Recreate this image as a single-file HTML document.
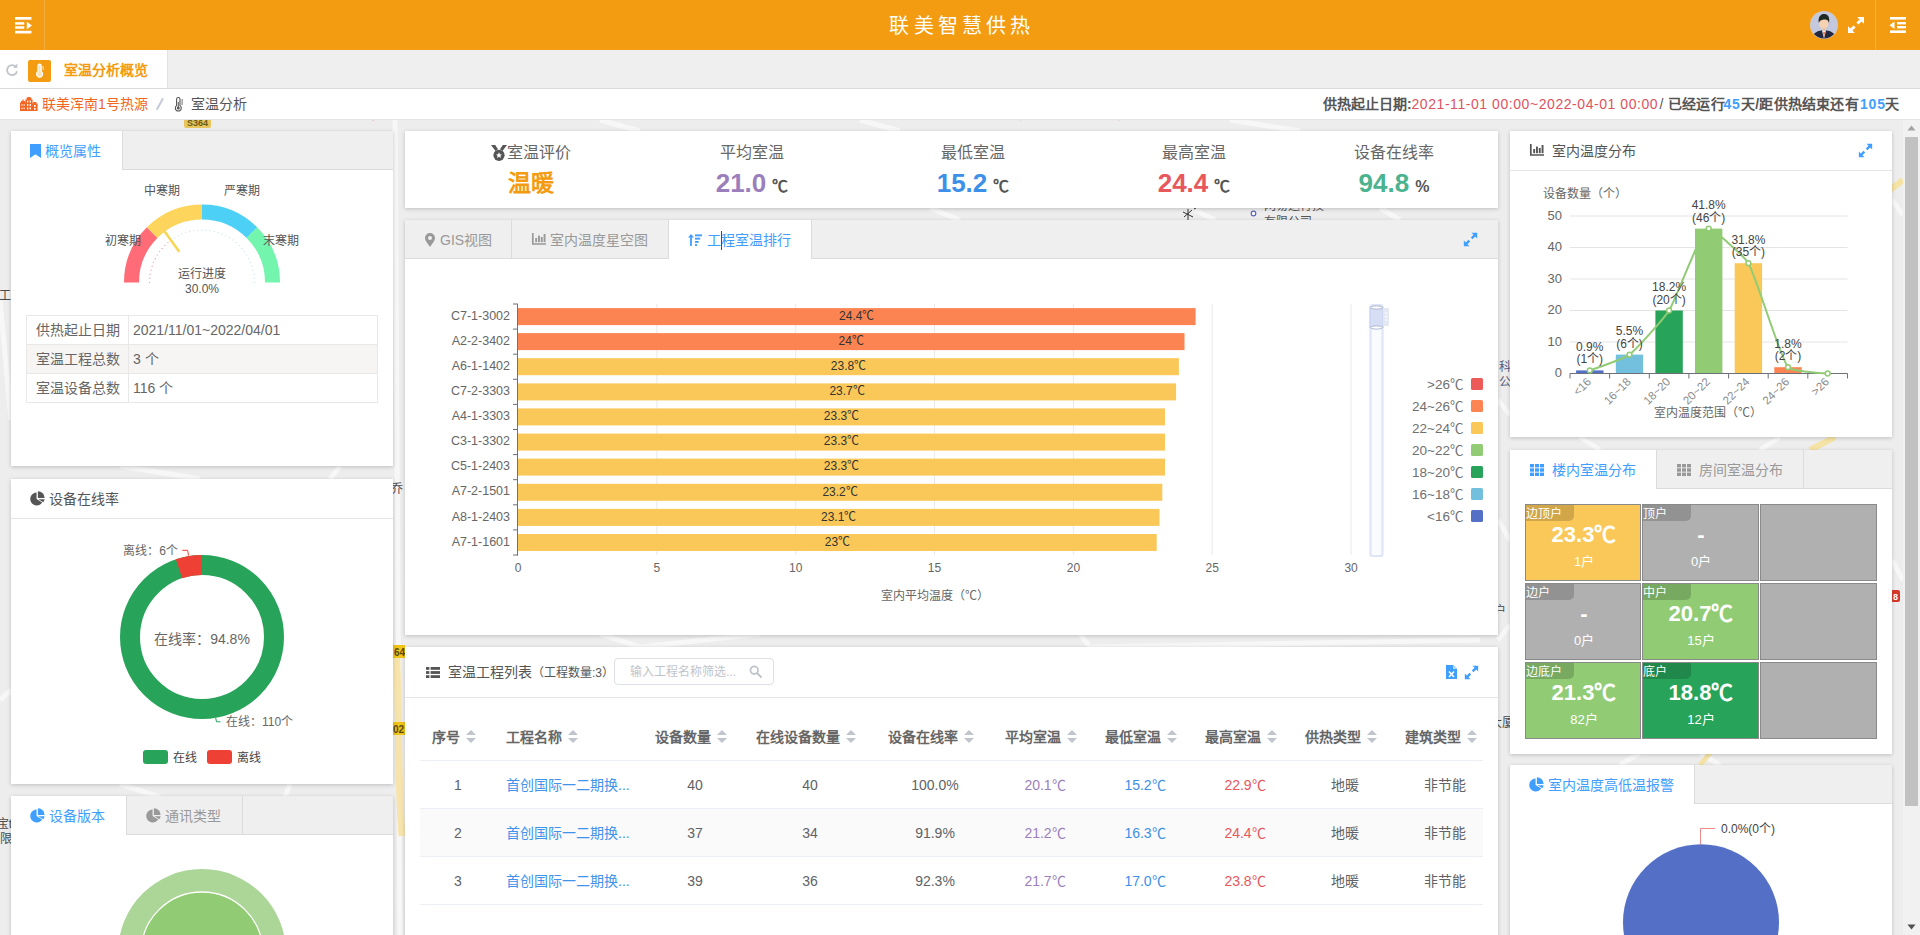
<!DOCTYPE html>
<html lang="zh-CN">
<head>
<meta charset="utf-8">
<title>联美智慧供热</title>
<style>
*{box-sizing:border-box;margin:0;padding:0}
html,body{width:1920px;height:935px;overflow:hidden}
body{font-family:"Liberation Sans",sans-serif;font-size:14px;color:#555;background:#ebebeb;position:relative}
.abs{position:absolute}
.t{position:absolute;white-space:nowrap;line-height:1}
.c{transform:translateX(-50%)}
.r{transform:translateX(-100%)}
#topbar{position:absolute;left:0;top:0;width:1920px;height:50px;background:#f39c12}
#tabbar{position:absolute;left:0;top:50px;width:1920px;height:39px;background:#efefef;border-bottom:1px solid #dcdcdc}
#crumb{position:absolute;left:0;top:89px;width:1920px;height:31px;background:#fff;border-bottom:1px solid #e4e4e4}
#main{position:absolute;left:0;top:120px;width:1920px;height:815px;background:#ededed;overflow:hidden}
.panel{position:absolute;background:#fff;box-shadow:0 1px 4px rgba(0,0,0,.2)}
.tabhead{position:absolute;left:0;top:0;right:0;height:39px;background:#efefef;border-bottom:1px solid #dcdcdc}
.tab{position:absolute;top:0;height:38px;border-right:1px solid #dcdcdc;color:#999;font-size:14px;line-height:40px;white-space:nowrap}
.tab.on{background:#fff;height:39px;color:#409eff}
.phead{position:absolute;left:0;top:0;right:0;height:40px;border-bottom:1px solid #e6e6e6}
svg{position:absolute;left:0;top:0;overflow:visible}
svg text{font-family:"Liberation Sans",sans-serif}
</style>
</head>
<body>
<!-- map background -->
<div id="main"></div>
<svg id="mapbg" width="1920" height="935" viewBox="0 0 1920 935" style="left:0;top:0">
  <g stroke="#f7f7f7" stroke-width="5" fill="none">
    <path d="M395 120 L400 935"/><path d="M0 300 L11 420"/><path d="M0 700 L11 690"/>
    <path d="M600 120 L640 131"/><path d="M860 120 L900 131"/><path d="M1230 120 L1300 131"/>
    <path d="M930 208 L960 220"/><path d="M1190 208 L1215 220"/><path d="M1380 208 L1400 220"/>
    <path d="M600 634 L640 647 L760 634"/><path d="M1080 634 L1090 647 L1480 640"/>
    <path d="M1498 400 L1510 415"/><path d="M1498 520 L1510 540"/><path d="M1498 640 L1510 625"/>
    <path d="M1892 200 L1903 215"/><path d="M1892 560 L1903 580"/>
    <path d="M1580 437 L1600 450"/><path d="M1780 437 L1760 450"/>
    <path d="M1640 753 L1620 765"/><path d="M1700 753 L1720 765"/>
    <path d="M120 466 L200 479"/><path d="M340 466 L330 479"/>
    <path d="M120 784 L160 797"/><path d="M290 784 L285 797"/>
  </g>
  <path d="M1810 450 L1835 437" stroke="#f5e3a6" stroke-width="6" fill="none"/>
  <path d="M1890 190 L1903 180" stroke="#f5e3a6" stroke-width="6" fill="none"/>
  <path d="M1710 753 L1700 765" stroke="#f5e3a6" stroke-width="5" fill="none"/>
  <path d="M396.5 650 C399 720 398 790 402 836" stroke="#f7e4ad" stroke-width="7" fill="none"/><rect x="393" y="645" width="12" height="13" fill="#f0c419"/><text x="394" y="656" font-size="10" font-weight="bold" fill="#5a4a10">64</text><rect x="393" y="722" width="12" height="13" fill="#f0c419"/><text x="393" y="733" font-size="10" font-weight="bold" fill="#5a4a10">02</text>
  <rect x="184" y="117" width="27" height="11" rx="2" fill="#e8c55a"/><text x="197.5" y="126" font-size="9" font-weight="bold" fill="#6b5a1a" text-anchor="middle">S364</text>
  <g font-size="12" fill="#4a4a4a">
    <text x="1264" y="210" fill="#555">网易运行技</text><text x="1264" y="226" fill="#555">有限公司</text>
    <text x="1498.5" y="371" fill="#5a6080">科</text><text x="1498.5" y="386" fill="#5a6080">公</text>
    <text x="11" y="299.5" text-anchor="end">造工</text>
    <text x="12" y="828" text-anchor="end">宝t</text><text x="12" y="843" text-anchor="end">有限</text>
    <text x="391" y="492.5">乔</text>
    <text x="1494" y="614.5">户</text><text x="1490" y="727">大厦</text>
  </g>
  <circle cx="1253.5" cy="213.5" r="2.3" fill="#fff" stroke="#5b64b8" stroke-width="1.2"/>
  <path d="M1183 212 L1193 217 M1184 217 L1192 210 M1188 209 V220 M1194 209 l2 -1" stroke="#333" stroke-width="1" fill="none"/>
  <rect x="1891" y="590" width="9" height="12" rx="2" fill="#d9372c"/><text x="1895.5" y="600" font-size="9" font-weight="bold" fill="#fff" text-anchor="middle">8</text>
  <path d="M372 120 l12 -6" stroke="#e7b9c0" stroke-width="2"/><path d="M1020 120 l6 -5 M1118 120 l6 -5" stroke="#d7b7bd" stroke-width="2"/>
</svg>

<!-- top bar -->
<div id="topbar">
  <div class="abs" style="left:44px;top:0;width:1px;height:50px;background:rgba(255,255,255,.18)"></div>
  <svg width="18.5" height="18.5" viewBox="0 0 18 18" style="left:14.6px;top:16px">
    <g fill="#fff"><rect x="0" y="1" width="16" height="2.6"/><rect x="0" y="6" width="9" height="2.4"/><rect x="0" y="10" width="9" height="2.4"/><rect x="0" y="14.4" width="16" height="2.6"/><path d="M11.5 5.5 L16.5 9.2 L11.5 13 Z"/></g>
  </svg>
  <div class="t c" style="left:962px;top:16px;font-size:20px;letter-spacing:4.2px;color:#fff">联美智慧供热</div>
  <!-- avatar -->
  <svg width="28" height="28" viewBox="0 0 28 28" style="left:1810px;top:11px">
    <defs><clipPath id="avc"><circle cx="14" cy="14" r="13.5"/></clipPath></defs>
    <circle cx="14" cy="14" r="14" fill="#d9c9b0"/>
    <g clip-path="url(#avc)">
      <rect width="28" height="28" fill="#c4c8de"/>
      <path d="M2 28 C3 21 8 19.5 14 19.5 C20 19.5 25 21 26 28 Z" fill="#22283f"/>
      <path d="M12 19.5 L14 28 L16 19.5 Z" fill="#f2efe9"/>
      <path d="M13.3 21 L14 27 L14.8 21 Z" fill="#d4532a"/>
      <ellipse cx="13.8" cy="12.4" rx="4.6" ry="5.6" fill="#f6d2b0"/>
      <path d="M8.8 12 C7.6 5 11.5 2.6 14.4 2.9 C18.2 3.1 20 6.6 19 12 C18.3 8.8 16.4 8 13.6 8.6 C11.2 9 9.6 10 8.8 12 Z" fill="#1f2a22"/>
      <rect x="12.6" y="16.5" width="2.8" height="3.4" fill="#f0c6a2"/>
    </g>
  </svg>
  <!-- expand icon -->
  <svg width="18" height="18" viewBox="0 0 18 18" style="left:1847px;top:16px">
    <g fill="#fff"><path d="M10.2 1 H17 V7.8 L14.6 5.4 L11.4 8.6 L9.4 6.6 L12.6 3.4 Z"/><path d="M7.8 17 H1 V10.2 L3.4 12.6 L6.6 9.4 L8.6 11.4 L5.4 14.6 Z"/></g>
  </svg>
  <div class="abs" style="left:1875px;top:0;width:1px;height:50px;background:rgba(255,255,255,.22)"></div>
  <svg width="18" height="18" viewBox="0 0 18 18" style="left:1889px;top:16px">
    <g fill="#fff"><rect x="1" y="1" width="16" height="2.6"/><rect x="8" y="6" width="9" height="2.4"/><rect x="8" y="10" width="9" height="2.4"/><rect x="1" y="14.4" width="16" height="2.6"/><path d="M5.5 5.5 L0.5 9.2 L5.5 13 Z"/></g>
  </svg>
</div>

<!-- tab bar -->
<div id="tabbar">
  <div class="abs" style="left:0;top:0;width:168px;height:38px;background:#fff;border-right:1px solid #e2e2e2"></div>
  <svg width="14" height="14" viewBox="0 0 14 14" style="left:5px;top:13px">
    <path d="M11.2 4.2 A5 5 0 1 0 12 8.2" fill="none" stroke="#c0c4cc" stroke-width="1.8"/><path d="M8 4.8 H12.4 V0.6 Z" fill="#c0c4cc"/>
  </svg>
  <div class="abs" style="left:28px;top:10px;width:23px;height:22px;background:#f39c12;border-radius:2px"></div>
  <svg width="10" height="14" viewBox="0 0 10 14" style="left:34.5px;top:13.5px">
    <g fill="none" stroke="#fff" stroke-width="1.2"><path d="M3 1.8 A1.6 1.6 0 0 1 6.2 1.8 V7.6 A3 3 0 1 1 3 7.6 Z" fill="#fbe2b6"/><path d="M7.4 3 H9 M7.4 5 H9"/></g>
  </svg>
  <div class="t" style="left:64px;top:13px;font-size:14px;font-weight:bold;color:#f39c12">室温分析概览</div>
</div>

<!-- breadcrumb -->
<div id="crumb">
  <svg width="18" height="14" viewBox="0 0 18 14" style="left:20px;top:8px">
    <g fill="#f26522"><path d="M0 14 V5.6 H1 V4 H2.4 V2.6 H3.6 V4 H5 V5.6 H6 V14 Z"/><path d="M5.4 14 V2.4 H6.6 V0.6 H8 V0 H10 V0.6 H11.4 V2.4 H12.6 V14 Z"/><path d="M12 14 V6.4 H13.2 V5 H16.4 V6.4 H17.6 V14 Z"/></g>
    <g fill="#fff"><rect x="1.4" y="7.2" width="1.1" height="1.5"/><rect x="3.6" y="7.2" width="1.1" height="1.5"/><rect x="1.4" y="10.6" width="1.1" height="1.5"/><rect x="3.6" y="10.6" width="1.1" height="1.5"/><rect x="7" y="3.6" width="1.3" height="2"/><rect x="9.6" y="3.6" width="1.3" height="2"/><rect x="7" y="7" width="1.3" height="2"/><rect x="9.6" y="7" width="1.3" height="2"/><rect x="7" y="10.4" width="1.3" height="2"/><rect x="9.6" y="10.4" width="1.3" height="2"/><rect x="14" y="8" width="1.6" height="1.8"/><rect x="14" y="11" width="1.6" height="1.8"/></g>
  </svg>
  <div class="t" style="left:42px;top:8px;font-size:14px;color:#f26522">联美浑南1号热源</div>
  <svg width="10" height="14" viewBox="0 0 10 14" style="left:155px;top:8px"><path d="M1.8 12.8 L8 1.2" stroke="#c5cad8" stroke-width="2" fill="none"/></svg>
  <svg width="10" height="15" viewBox="0 0 10 15" style="left:174px;top:8px">
    <g fill="none" stroke="#555" stroke-width="1.1"><path d="M2.6 2.2 A1.7 1.7 0 0 1 6 2.2 V8.6 A3 3 0 1 1 2.6 8.6 Z"/><path d="M7.4 3 H9 M7.4 5 H9 M7.4 7 H9"/></g><circle cx="4.3" cy="11" r="1.5" fill="#555"/><rect x="3.8" y="5" width="1" height="5" fill="#555"/>
  </svg>
  <div class="t" style="left:191px;top:8px;font-size:14px;color:#555">室温分析</div>
  <div class="t" style="left:1323px;top:8px;font-size:14px;color:#555;font-weight:bold">供热起止日期:</div><div class="t" style="left:1411.5px;top:8px;font-size:14px;color:#e05260;letter-spacing:.56px">2021-11-01 00:00~2022-04-01 00:00</div><div class="t" style="left:1659.5px;top:8px;font-size:14px;color:#555;letter-spacing:.3px">/ <b>已经运行</b></div><div class="t" style="left:1723.5px;top:8px;font-size:14px;color:#409eff;font-weight:bold;letter-spacing:.8px">45</div><div class="t" style="left:1741px;top:8px;font-size:14px;color:#555;font-weight:bold;letter-spacing:.22px">天/距供热结束还有</div><div class="t" style="left:1860px;top:8px;font-size:14px;color:#409eff;font-weight:bold;letter-spacing:.8px">105</div><div class="t" style="left:1885px;top:8px;font-size:14px;color:#555;font-weight:bold">天</div>
</div>

<!-- scrollbar -->
<div class="abs" style="left:1903px;top:120px;width:17px;height:815px;background:#f1f1f1"></div>
<div class="abs" style="left:1905px;top:137px;width:13px;height:669px;background:#c1c1c1"></div>
<svg width="17" height="17" viewBox="0 0 17 17" style="left:1903px;top:120px"><path d="M4.5 10.5 L8.5 5.5 L12.5 10.5 Z" fill="#a3a3a3"/></svg>
<svg width="17" height="17" viewBox="0 0 17 17" style="left:1903px;top:918px"><path d="M4.5 6.5 L8.5 11.5 L12.5 6.5 Z" fill="#505050"/></svg>
<div class="panel" style="left:11px;top:131px;width:382px;height:335px">
<div class="tabhead"><div class="tab on" style="left:0;width:112px;padding-left:19px"><svg width="11" height="14" viewBox="0 0 11 14" style="position:relative;top:2px;margin-right:4px"><path d="M0 0 H11 V14 L5.5 10.2 L0 14 Z" fill="#409eff"/></svg>概览属性</div></div>
<svg width="382" height="335" viewBox="0 0 382 335">
<path d="M113.00 151.50 A78 78 0 0 1 135.85 96.35 L146.45 106.95 A63 63 0 0 0 128.00 151.50 Z" fill="#ff6b76"/>
<path d="M135.85 96.35 A78 78 0 0 1 191.00 73.50 L191.00 88.50 A63 63 0 0 0 146.45 106.95 Z" fill="#fdd55c"/>
<path d="M191.00 73.50 A78 78 0 0 1 246.15 96.35 L235.55 106.95 A63 63 0 0 0 191.00 88.50 Z" fill="#4dd0f5"/>
<path d="M246.15 96.35 A78 78 0 0 1 269.00 151.50 L254.00 151.50 A63 63 0 0 0 235.55 106.95 Z" fill="#74f5ae"/>
<circle cx="138.5" cy="151.5" r="0.7" fill="#f3a5ab"/>
<circle cx="138.7" cy="147.4" r="0.7" fill="#f3a5ab"/>
<circle cx="139.1" cy="143.3" r="0.7" fill="#f3a5ab"/>
<circle cx="140.0" cy="139.2" r="0.7" fill="#f3a5ab"/>
<circle cx="141.1" cy="135.3" r="0.7" fill="#f3a5ab"/>
<circle cx="142.5" cy="131.4" r="0.7" fill="#f3a5ab"/>
<circle cx="144.2" cy="127.7" r="0.7" fill="#f3a5ab"/>
<circle cx="146.2" cy="124.1" r="0.7" fill="#f3a5ab"/>
<circle cx="148.5" cy="120.6" r="0.7" fill="#f3a5ab"/>
<circle cx="151.1" cy="117.4" r="0.7" fill="#f3a5ab"/>
<circle cx="153.9" cy="114.4" r="0.7" fill="#f3a5ab"/>
<circle cx="156.9" cy="111.6" r="0.7" fill="#f3a5ab"/>
<circle cx="160.1" cy="109.0" r="0.7" fill="#f3a5ab"/>
<circle cx="163.6" cy="106.7" r="0.7" fill="#cfe6f3"/>
<circle cx="167.2" cy="104.7" r="0.7" fill="#cfe6f3"/>
<circle cx="170.9" cy="103.0" r="0.7" fill="#cfe6f3"/>
<circle cx="174.8" cy="101.6" r="0.7" fill="#cfe6f3"/>
<circle cx="178.7" cy="100.5" r="0.7" fill="#cfe6f3"/>
<circle cx="182.8" cy="99.6" r="0.7" fill="#cfe6f3"/>
<circle cx="186.9" cy="99.2" r="0.7" fill="#cfe6f3"/>
<circle cx="191.0" cy="99.0" r="0.7" fill="#cfe6f3"/>
<circle cx="195.1" cy="99.2" r="0.7" fill="#cfe6f3"/>
<circle cx="199.2" cy="99.6" r="0.7" fill="#cfe6f3"/>
<circle cx="203.3" cy="100.5" r="0.7" fill="#cfe6f3"/>
<circle cx="207.2" cy="101.6" r="0.7" fill="#cfe6f3"/>
<circle cx="211.1" cy="103.0" r="0.7" fill="#cfe6f3"/>
<circle cx="214.8" cy="104.7" r="0.7" fill="#cfe6f3"/>
<circle cx="218.4" cy="106.7" r="0.7" fill="#cfe6f3"/>
<circle cx="221.9" cy="109.0" r="0.7" fill="#cfe6f3"/>
<circle cx="225.1" cy="111.6" r="0.7" fill="#cfe6f3"/>
<circle cx="228.1" cy="114.4" r="0.7" fill="#cfe6f3"/>
<circle cx="230.9" cy="117.4" r="0.7" fill="#cfe6f3"/>
<circle cx="233.5" cy="120.6" r="0.7" fill="#cfe6f3"/>
<circle cx="235.8" cy="124.1" r="0.7" fill="#cfe6f3"/>
<circle cx="237.8" cy="127.7" r="0.7" fill="#cfe6f3"/>
<circle cx="239.5" cy="131.4" r="0.7" fill="#cfe6f3"/>
<circle cx="240.9" cy="135.3" r="0.7" fill="#cfe6f3"/>
<circle cx="242.0" cy="139.2" r="0.7" fill="#cfe6f3"/>
<circle cx="242.9" cy="143.3" r="0.7" fill="#cfe6f3"/>
<circle cx="243.3" cy="147.4" r="0.7" fill="#cfe6f3"/>
<circle cx="243.5" cy="151.5" r="0.7" fill="#cfe6f3"/>
<path d="M154.2 101.3 L167.7 119.9" stroke="#f6d654" stroke-width="2.6" stroke-linecap="round"/>
<text x="151" y="63.5" font-size="12" fill="#555" text-anchor="middle" >中寒期</text>
<text x="231" y="63.5" font-size="12" fill="#555" text-anchor="middle" >严寒期</text>
<text x="111.5" y="113.5" font-size="12" fill="#555" text-anchor="middle" >初寒期</text>
<text x="270" y="113.5" font-size="12" fill="#555" text-anchor="middle" >末寒期</text>
<text x="191" y="147.2" font-size="12" fill="#555" text-anchor="middle" >运行进度</text>
<text x="191" y="162" font-size="12" fill="#555" text-anchor="middle" >30.0%</text>
</svg>
<div class="abs" style="left:15px;top:184px;width:352px;height:88px;border:1px solid #e8e8e8;font-size:14px;color:#666">
<div class="abs" style="left:0;top:0px;width:350px;height:29px;background:#fff;border-bottom:1px solid #e8e8e8"><div class="abs" style="left:0;top:0;width:102px;height:28px;border-right:1px solid #e8e8e8;line-height:28px;padding-left:9px">供热起止日期</div><div class="abs" style="left:106px;top:0;line-height:28px;white-space:nowrap">2021/11/01~2022/04/01</div></div>
<div class="abs" style="left:0;top:29px;width:350px;height:29px;background:#f7f4f4;border-bottom:1px solid #e8e8e8"><div class="abs" style="left:0;top:0;width:102px;height:28px;border-right:1px solid #e8e8e8;line-height:28px;padding-left:9px">室温工程总数</div><div class="abs" style="left:106px;top:0;line-height:28px;white-space:nowrap">3 个</div></div>
<div class="abs" style="left:0;top:58px;width:350px;height:29px;background:#fff;border-bottom:1px solid #e8e8e8"><div class="abs" style="left:0;top:0;width:102px;height:28px;border-right:1px solid #e8e8e8;line-height:28px;padding-left:9px">室温设备总数</div><div class="abs" style="left:106px;top:0;line-height:28px;white-space:nowrap">116 个</div></div>
</div>
</div>
<div class="panel" style="left:11px;top:479px;width:382px;height:305px">
<div class="phead"><div class="abs" style="left:19px;top:0;line-height:40px;font-size:14px;color:#555;white-space:nowrap"><svg width="15" height="15" viewBox="0 0 16 16" style="position:relative;left:0;top:2px;margin-right:4px;overflow:visible"><path d="M7 1.6 A6.9 6.9 0 1 0 13 12.2 L7 8.6 Z" fill="#555"/><path d="M8.4 0.4 A7 7 0 0 1 15.6 7.4 H8.4 Z" fill="#555"/><path d="M9 8.8 H15.6 A7 7 0 0 1 14.2 11.9 Z" fill="#555"/></svg>设备在线率</div></div>
<svg width="382" height="305" viewBox="0 0 382 305" style="top:0.8px">
<circle cx="191" cy="157" r="72" fill="none" stroke="#27a45a" stroke-width="20"/>
<path d="M164.82 79.29 A82 82 0 0 1 191.00 75.00 L191.00 95.00 A62 62 0 0 0 171.20 98.25 Z" fill="#ee4035"/>
<text x="191" y="164" font-size="14" fill="#666" text-anchor="middle" >在线率：94.8%</text>
<path d="M171.3 70.3 H176.6 L177.6 75.6" fill="none" stroke="#ee4035" stroke-width="1"/>
<path d="M204.7 238 L205.5 241.8 H209.5" fill="none" stroke="#27a45a" stroke-width="1"/>
<text x="167" y="75" font-size="12" fill="#666" text-anchor="end" >离线：6个</text>
<text x="215" y="246" font-size="12" fill="#666" text-anchor="start" >在线：110个</text>
<rect x="132" y="270" width="25" height="14" rx="3" fill="#27a45a"/>
<text x="162" y="281.5" font-size="12" fill="#444" text-anchor="start" >在线</text>
<rect x="196" y="270" width="25" height="14" rx="3" fill="#ee4035"/>
<text x="226" y="281.5" font-size="12" fill="#444" text-anchor="start" >离线</text>
</svg></div>
<div class="panel" style="left:11px;top:796px;width:382px;height:160px">
<div class="tabhead"><div class="tab on" style="left:0;width:116px;padding-left:19px"><svg width="15" height="15" viewBox="0 0 16 16" style="position:relative;left:0;top:2px;margin-right:4px;overflow:visible"><path d="M7 1.6 A6.9 6.9 0 1 0 13 12.2 L7 8.6 Z" fill="#409eff"/><path d="M8.4 0.4 A7 7 0 0 1 15.6 7.4 H8.4 Z" fill="#409eff"/><path d="M9 8.8 H15.6 A7 7 0 0 1 14.2 11.9 Z" fill="#409eff"/></svg>设备版本</div><div class="tab" style="left:116px;width:116px;padding-left:19px"><svg width="15" height="15" viewBox="0 0 16 16" style="position:relative;left:0;top:2px;margin-right:4px;overflow:visible"><path d="M7 1.6 A6.9 6.9 0 1 0 13 12.2 L7 8.6 Z" fill="#999"/><path d="M8.4 0.4 A7 7 0 0 1 15.6 7.4 H8.4 Z" fill="#999"/><path d="M9 8.8 H15.6 A7 7 0 0 1 14.2 11.9 Z" fill="#999"/></svg>通讯类型</div></div>
<svg width="382" height="139" viewBox="0 0 382 139" style="overflow:hidden">
<circle cx="191" cy="157" r="84" fill="#acd598"/><circle cx="191" cy="157" r="61" fill="#91cc75" stroke="#fff" stroke-width="1.3"/>
</svg></div><div class="panel" style="left:405px;top:131px;width:1093px;height:77px">
<svg width="16" height="16" viewBox="0 0 16 16" style="left:86px;top:14px"><g fill="#555"><path d="M0 0 H4.2 L7 4.2 L4.6 6 Z"/><path d="M16 0 H11.8 L9 4.2 L11.4 6 Z"/><circle cx="8" cy="10.3" r="5.6"/></g><path d="M8 7.2 L8.9 9.2 L11 9.4 L9.4 10.8 L9.9 12.9 L8 11.8 L6.1 12.9 L6.6 10.8 L5 9.4 L7.1 9.2 Z" fill="#fff"/></svg>
<div class="t" style="left:102px;top:14px;font-size:16px;color:#666">室温评价</div>
<div class="t c" style="left:126px;top:41px;font-size:23px;font-weight:bold;color:#f39c12">温暖</div>
<div class="t c" style="left:347px;top:13.8px;font-size:16px;color:#666">平均室温</div>
<div class="t c" style="left:347px;top:38.6px;font-size:26px;font-weight:bold;color:#9b7fbd">21.0<span style="font-size:16px;color:#555;margin-left:6px">℃</span></div>
<div class="t c" style="left:568px;top:13.8px;font-size:16px;color:#666">最低室温</div>
<div class="t c" style="left:568px;top:38.6px;font-size:26px;font-weight:bold;color:#3d8fe8">15.2<span style="font-size:16px;color:#555;margin-left:6px">℃</span></div>
<div class="t c" style="left:789px;top:13.8px;font-size:16px;color:#666">最高室温</div>
<div class="t c" style="left:789px;top:38.6px;font-size:26px;font-weight:bold;color:#e8575c">24.4<span style="font-size:16px;color:#555;margin-left:6px">℃</span></div>
<div class="t c" style="left:989px;top:13.8px;font-size:16px;color:#666">设备在线率</div>
<div class="t c" style="left:989px;top:38.6px;font-size:26px;font-weight:bold;color:#4bb38f">94.8<span style="font-size:16px;color:#555;margin-left:6px">%</span></div>
</div>
<div class="panel" style="left:405px;top:220px;width:1093px;height:415px">
<div class="tabhead"><div class="tab" style="left:0;width:107px;padding-left:20px"><svg width="10" height="14" viewBox="0 0 10 14" style="position:relative;top:2px;margin-right:5px"><path d="M5 0 A5 5 0 0 1 10 5 C10 8 6.5 11.5 5 14 C3.5 11.5 0 8 0 5 A5 5 0 0 1 5 0 Z M5 3 A2 2 0 1 0 5 7 A2 2 0 1 0 5 3 Z" fill="#999" fill-rule="evenodd"/></svg>GIS视图</div><div class="tab" style="left:107px;width:157px;padding-left:20px"><svg width="14" height="12" viewBox="0 0 14 12" style="position:relative;left:0;top:0px;margin-right:4px;overflow:visible"><path d="M0.8 0 V11 H14" fill="none" stroke="#999" stroke-width="1.7"/><g fill="#999"><rect x="3.2" y="5" width="1.9" height="4.2"/><rect x="6" y="2.6" width="1.9" height="6.6"/><rect x="8.8" y="4" width="1.9" height="5.2"/><rect x="11.6" y="1" width="1.9" height="8.2"/></g></svg>室内温度星空图</div><div class="tab on" style="left:264px;width:143px;padding-left:19px"><svg width="14" height="12" viewBox="0 0 14 12" style="position:relative;top:1px;margin-right:5px"><g fill="#409eff"><path d="M3 0 L6 3.4 H3.9 V12 H2.1 V3.4 H0 Z"/><rect x="7" y="0.4" width="7" height="1.9"/><rect x="7" y="3.7" width="5.2" height="1.9"/><rect x="7" y="7" width="3.6" height="1.9"/><rect x="7" y="10.1" width="2" height="1.9"/></g></svg>工程室温排行</div></div>
<div class="abs" style="left:316px;top:11px;width:1px;height:19px;background:#2b4a8c"></div>
<svg width="15" height="15" viewBox="0 0 18 18" style="left:1058px;top:12px"><g fill="#409eff"><path d="M10.2 1 H17 V7.8 L14.6 5.4 L11.4 8.6 L9.4 6.6 L12.6 3.4 Z"/><path d="M7.8 17 H1 V10.2 L3.4 12.6 L6.6 9.4 L8.6 11.4 L5.4 14.6 Z"/></g></svg>
<svg width="1093" height="414" viewBox="405 220 1093 414">
<path d="M656.9 304 V555" stroke="#e9e9e9" stroke-width="1"/>
<path d="M795.7 304 V555" stroke="#e9e9e9" stroke-width="1"/>
<path d="M934.5 304 V555" stroke="#e9e9e9" stroke-width="1"/>
<path d="M1073.4 304 V555" stroke="#e9e9e9" stroke-width="1"/>
<path d="M1212.2 304 V555" stroke="#e9e9e9" stroke-width="1"/>
<path d="M1351.1 304 V555" stroke="#e9e9e9" stroke-width="1"/>
<rect x="518" y="308.1" width="677.6" height="17" fill="#fc8452"/>
<text x="856.8" y="319.9" font-size="12" fill="#333" text-anchor="middle" >24.4℃</text>
<text x="510" y="319.8" font-size="12.5" fill="#666" text-anchor="end" >C7-1-3002</text>
<rect x="518" y="333.1" width="666.5" height="17" fill="#fc8452"/>
<text x="851.2" y="344.9" font-size="12" fill="#333" text-anchor="middle" >24℃</text>
<text x="510" y="344.8" font-size="12.5" fill="#666" text-anchor="end" >A2-2-3402</text>
<rect x="518" y="358.2" width="660.9" height="17" fill="#fac858"/>
<text x="848.5" y="370.1" font-size="12" fill="#333" text-anchor="middle" >23.8℃</text>
<text x="510" y="369.9" font-size="12.5" fill="#666" text-anchor="end" >A6-1-1402</text>
<rect x="518" y="383.4" width="658.1" height="17" fill="#fac858"/>
<text x="847.1" y="395.2" font-size="12" fill="#333" text-anchor="middle" >23.7℃</text>
<text x="510" y="395.1" font-size="12.5" fill="#666" text-anchor="end" >C7-2-3303</text>
<rect x="518" y="408.4" width="647.0" height="17" fill="#fac858"/>
<text x="841.5" y="420.2" font-size="12" fill="#333" text-anchor="middle" >23.3℃</text>
<text x="510" y="420.1" font-size="12.5" fill="#666" text-anchor="end" >A4-1-3303</text>
<rect x="518" y="433.6" width="647.0" height="17" fill="#fac858"/>
<text x="841.5" y="445.4" font-size="12" fill="#333" text-anchor="middle" >23.3℃</text>
<text x="510" y="445.2" font-size="12.5" fill="#666" text-anchor="end" >C3-1-3302</text>
<rect x="518" y="458.6" width="647.0" height="17" fill="#fac858"/>
<text x="841.5" y="470.4" font-size="12" fill="#333" text-anchor="middle" >23.3℃</text>
<text x="510" y="470.3" font-size="12.5" fill="#666" text-anchor="end" >C5-1-2403</text>
<rect x="518" y="483.8" width="644.3" height="17" fill="#fac858"/>
<text x="840.1" y="495.6" font-size="12" fill="#333" text-anchor="middle" >23.2℃</text>
<text x="510" y="495.4" font-size="12.5" fill="#666" text-anchor="end" >A7-2-1501</text>
<rect x="518" y="508.9" width="641.5" height="17" fill="#fac858"/>
<text x="838.7" y="520.6" font-size="12" fill="#333" text-anchor="middle" >23.1℃</text>
<text x="510" y="520.6" font-size="12.5" fill="#666" text-anchor="end" >A8-1-2403</text>
<rect x="518" y="534.0" width="638.7" height="17" fill="#fac858"/>
<text x="837.4" y="545.8" font-size="12" fill="#333" text-anchor="middle" >23℃</text>
<text x="510" y="545.7" font-size="12.5" fill="#666" text-anchor="end" >A7-1-1601</text>
<path d="M517.5 304 V555.5" stroke="#6e7079" stroke-width="1"/>
<path d="M513 304.0 H518" stroke="#6e7079" stroke-width="1"/>
<path d="M513 329.1 H518" stroke="#6e7079" stroke-width="1"/>
<path d="M513 354.2 H518" stroke="#6e7079" stroke-width="1"/>
<path d="M513 379.3 H518" stroke="#6e7079" stroke-width="1"/>
<path d="M513 404.4 H518" stroke="#6e7079" stroke-width="1"/>
<path d="M513 429.5 H518" stroke="#6e7079" stroke-width="1"/>
<path d="M513 454.6 H518" stroke="#6e7079" stroke-width="1"/>
<path d="M513 479.7 H518" stroke="#6e7079" stroke-width="1"/>
<path d="M513 504.8 H518" stroke="#6e7079" stroke-width="1"/>
<path d="M513 529.9 H518" stroke="#6e7079" stroke-width="1"/>
<path d="M513 555.0 H518" stroke="#6e7079" stroke-width="1"/>
<text x="518.0" y="572" font-size="12" fill="#666" text-anchor="middle" >0</text>
<text x="656.9" y="572" font-size="12" fill="#666" text-anchor="middle" >5</text>
<text x="795.7" y="572" font-size="12" fill="#666" text-anchor="middle" >10</text>
<text x="934.5" y="572" font-size="12" fill="#666" text-anchor="middle" >15</text>
<text x="1073.4" y="572" font-size="12" fill="#666" text-anchor="middle" >20</text>
<text x="1212.2" y="572" font-size="12" fill="#666" text-anchor="middle" >25</text>
<text x="1351.1" y="572" font-size="12" fill="#666" text-anchor="middle" >30</text>
<text x="935" y="599.5" font-size="12" fill="#666" text-anchor="middle" >室内平均温度（℃）</text>
<rect x="1370.5" y="305" width="12" height="251" rx="2" fill="#fafbff" stroke="#dfe5f6" stroke-width="2.2"/>
<rect x="1370" y="307.5" width="13" height="20" fill="#d6def5" stroke="#c3cef0" stroke-width="1"/>
<ellipse cx="1376.5" cy="307.5" rx="6" ry="1.6" fill="#fff" stroke="#acb8d1" stroke-width="1"/><ellipse cx="1376.5" cy="327.5" rx="6" ry="1.6" fill="#fff" stroke="#acb8d1" stroke-width="1"/>
<rect x="1383" y="308" width="6" height="18" fill="#e3e8f3"/><path d="M1385 313 H1387.5 M1385 316.5 H1387.5 M1385 320 H1387.5" stroke="#fff" stroke-width="1"/>
<rect x="1471" y="378" width="12" height="12" rx="1.5" fill="#ee5a5a"/>
<text x="1463" y="388.5" font-size="13.5" fill="#707070" text-anchor="end" >&gt;26℃</text>
<rect x="1471" y="400" width="12" height="12" rx="1.5" fill="#fc8452"/>
<text x="1463" y="410.5" font-size="13.5" fill="#707070" text-anchor="end" >24~26℃</text>
<rect x="1471" y="422" width="12" height="12" rx="1.5" fill="#fac858"/>
<text x="1463" y="432.5" font-size="13.5" fill="#707070" text-anchor="end" >22~24℃</text>
<rect x="1471" y="444" width="12" height="12" rx="1.5" fill="#91cc75"/>
<text x="1463" y="454.5" font-size="13.5" fill="#707070" text-anchor="end" >20~22℃</text>
<rect x="1471" y="466" width="12" height="12" rx="1.5" fill="#27a45a"/>
<text x="1463" y="476.5" font-size="13.5" fill="#707070" text-anchor="end" >18~20℃</text>
<rect x="1471" y="488" width="12" height="12" rx="1.5" fill="#73c0de"/>
<text x="1463" y="498.5" font-size="13.5" fill="#707070" text-anchor="end" >16~18℃</text>
<rect x="1471" y="510" width="12" height="12" rx="1.5" fill="#5470c6"/>
<text x="1463" y="520.5" font-size="13.5" fill="#707070" text-anchor="end" >&lt;16℃</text>
</svg></div>
<div class="panel" style="left:405px;top:647px;width:1093px;height:300px">
<div class="abs" style="left:0;top:0;width:1093px;height:51px;border-bottom:1px solid #e6e6e6"></div>
<svg width="14" height="11" viewBox="0 0 14 11" style="left:21px;top:20px"><g fill="#555"><rect x="0" y="0" width="3.4" height="2.8"/><rect x="4.6" y="0" width="9.4" height="2.8"/><rect x="0" y="4.1" width="3.4" height="2.8"/><rect x="4.6" y="4.1" width="9.4" height="2.8"/><rect x="0" y="8.2" width="3.4" height="2.8"/><rect x="4.6" y="8.2" width="9.4" height="2.8"/></g></svg>
<div class="t" style="left:43px;top:18px;font-size:14px;color:#555">室温工程列表<span style="font-size:12px">（工程数量:3）</span></div>
<div class="abs" style="left:209px;top:11px;width:160px;height:27px;border:1px solid #dcdfe6;border-radius:4px;background:#fff"></div>
<div class="t" style="left:225px;top:19px;font-size:12px;color:#c0c4cc">输入工程名称筛选...</div>
<svg width="13" height="13" viewBox="0 0 13 13" style="left:344px;top:18px"><circle cx="5.2" cy="5.2" r="3.8" fill="none" stroke="#c0c4cc" stroke-width="1.8"/><path d="M8 8 L12 12" stroke="#c0c4cc" stroke-width="2" stroke-linecap="round"/></svg>
<svg width="11" height="14" viewBox="0 0 11 14" style="left:1041px;top:18px"><path d="M0 0 H7 L11 4 V14 H0 Z" fill="#409eff"/><path d="M7 0 V4 H11 Z" fill="#b3d8ff"/><path d="M3 6.5 L8 12 M8 6.5 L3 12" stroke="#fff" stroke-width="1.5"/></svg>
<svg width="15" height="15" viewBox="0 0 18 18" style="left:1059px;top:18px"><g fill="#409eff"><path d="M10.2 1 H17 V7.8 L14.6 5.4 L11.4 8.6 L9.4 6.6 L12.6 3.4 Z"/><path d="M7.8 17 H1 V10.2 L3.4 12.6 L6.6 9.4 L8.6 11.4 L5.4 14.6 Z"/></g></svg>
<div class="t" style="left:27px;top:83px;font-size:14px;font-weight:bold;color:#666">序号<span style="display:inline-block;position:relative;width:10px;height:14px;margin-left:6px;vertical-align:-2px"><i style="position:absolute;left:0;top:0;border:5px solid transparent;border-bottom-color:#c0c4cc;border-top-width:0"></i><i style="position:absolute;left:0;top:8px;border:5px solid transparent;border-top-color:#c0c4cc;border-bottom-width:0"></i></span></div>
<div class="t" style="left:101px;top:83px;font-size:14px;font-weight:bold;color:#666">工程名称<span style="display:inline-block;position:relative;width:10px;height:14px;margin-left:6px;vertical-align:-2px"><i style="position:absolute;left:0;top:0;border:5px solid transparent;border-bottom-color:#c0c4cc;border-top-width:0"></i><i style="position:absolute;left:0;top:8px;border:5px solid transparent;border-top-color:#c0c4cc;border-bottom-width:0"></i></span></div>
<div class="t" style="left:250px;top:83px;font-size:14px;font-weight:bold;color:#666">设备数量<span style="display:inline-block;position:relative;width:10px;height:14px;margin-left:6px;vertical-align:-2px"><i style="position:absolute;left:0;top:0;border:5px solid transparent;border-bottom-color:#c0c4cc;border-top-width:0"></i><i style="position:absolute;left:0;top:8px;border:5px solid transparent;border-top-color:#c0c4cc;border-bottom-width:0"></i></span></div>
<div class="t" style="left:351px;top:83px;font-size:14px;font-weight:bold;color:#666">在线设备数量<span style="display:inline-block;position:relative;width:10px;height:14px;margin-left:6px;vertical-align:-2px"><i style="position:absolute;left:0;top:0;border:5px solid transparent;border-bottom-color:#c0c4cc;border-top-width:0"></i><i style="position:absolute;left:0;top:8px;border:5px solid transparent;border-top-color:#c0c4cc;border-bottom-width:0"></i></span></div>
<div class="t" style="left:483px;top:83px;font-size:14px;font-weight:bold;color:#666">设备在线率<span style="display:inline-block;position:relative;width:10px;height:14px;margin-left:6px;vertical-align:-2px"><i style="position:absolute;left:0;top:0;border:5px solid transparent;border-bottom-color:#c0c4cc;border-top-width:0"></i><i style="position:absolute;left:0;top:8px;border:5px solid transparent;border-top-color:#c0c4cc;border-bottom-width:0"></i></span></div>
<div class="t" style="left:600px;top:83px;font-size:14px;font-weight:bold;color:#666">平均室温<span style="display:inline-block;position:relative;width:10px;height:14px;margin-left:6px;vertical-align:-2px"><i style="position:absolute;left:0;top:0;border:5px solid transparent;border-bottom-color:#c0c4cc;border-top-width:0"></i><i style="position:absolute;left:0;top:8px;border:5px solid transparent;border-top-color:#c0c4cc;border-bottom-width:0"></i></span></div>
<div class="t" style="left:700px;top:83px;font-size:14px;font-weight:bold;color:#666">最低室温<span style="display:inline-block;position:relative;width:10px;height:14px;margin-left:6px;vertical-align:-2px"><i style="position:absolute;left:0;top:0;border:5px solid transparent;border-bottom-color:#c0c4cc;border-top-width:0"></i><i style="position:absolute;left:0;top:8px;border:5px solid transparent;border-top-color:#c0c4cc;border-bottom-width:0"></i></span></div>
<div class="t" style="left:800px;top:83px;font-size:14px;font-weight:bold;color:#666">最高室温<span style="display:inline-block;position:relative;width:10px;height:14px;margin-left:6px;vertical-align:-2px"><i style="position:absolute;left:0;top:0;border:5px solid transparent;border-bottom-color:#c0c4cc;border-top-width:0"></i><i style="position:absolute;left:0;top:8px;border:5px solid transparent;border-top-color:#c0c4cc;border-bottom-width:0"></i></span></div>
<div class="t" style="left:900px;top:83px;font-size:14px;font-weight:bold;color:#666">供热类型<span style="display:inline-block;position:relative;width:10px;height:14px;margin-left:6px;vertical-align:-2px"><i style="position:absolute;left:0;top:0;border:5px solid transparent;border-bottom-color:#c0c4cc;border-top-width:0"></i><i style="position:absolute;left:0;top:8px;border:5px solid transparent;border-top-color:#c0c4cc;border-bottom-width:0"></i></span></div>
<div class="t" style="left:1000px;top:83px;font-size:14px;font-weight:bold;color:#666">建筑类型<span style="display:inline-block;position:relative;width:10px;height:14px;margin-left:6px;vertical-align:-2px"><i style="position:absolute;left:0;top:0;border:5px solid transparent;border-bottom-color:#c0c4cc;border-top-width:0"></i><i style="position:absolute;left:0;top:8px;border:5px solid transparent;border-top-color:#c0c4cc;border-bottom-width:0"></i></span></div>
<div class="abs" style="left:15px;top:113px;width:1063px;height:1px;background:#ebeef5"></div>
<div class="abs" style="left:15px;top:114px;width:1063px;height:48px;background:#fff;border-bottom:1px solid #ebeef5"></div>
<div class="t c" style="left:53.0px;top:131px;font-size:14px;color:#606266">1</div>
<div class="t" style="left:101px;top:131px;font-size:14px;color:#3f93ec">首创国际一二期换...</div>
<div class="t c" style="left:290.0px;top:131px;font-size:14px;color:#606266">40</div>
<div class="t c" style="left:405.0px;top:131px;font-size:14px;color:#606266">40</div>
<div class="t c" style="left:530.0px;top:131px;font-size:14px;color:#606266">100.0%</div>
<div class="t c" style="left:640.0px;top:131px;font-size:14px;color:#9b7fbd">20.1℃</div>
<div class="t c" style="left:740.0px;top:131px;font-size:14px;color:#3d8fe8">15.2℃</div>
<div class="t c" style="left:840.0px;top:131px;font-size:14px;color:#e8575c">22.9℃</div>
<div class="t c" style="left:940.0px;top:131px;font-size:14px;color:#606266">地暖</div>
<div class="t c" style="left:1040.0px;top:131px;font-size:14px;color:#606266">非节能</div>
<div class="abs" style="left:15px;top:162px;width:1063px;height:48px;background:#fafafa;border-bottom:1px solid #ebeef5"></div>
<div class="t c" style="left:53.0px;top:179px;font-size:14px;color:#606266">2</div>
<div class="t" style="left:101px;top:179px;font-size:14px;color:#3f93ec">首创国际一二期换...</div>
<div class="t c" style="left:290.0px;top:179px;font-size:14px;color:#606266">37</div>
<div class="t c" style="left:405.0px;top:179px;font-size:14px;color:#606266">34</div>
<div class="t c" style="left:530.0px;top:179px;font-size:14px;color:#606266">91.9%</div>
<div class="t c" style="left:640.0px;top:179px;font-size:14px;color:#9b7fbd">21.2℃</div>
<div class="t c" style="left:740.0px;top:179px;font-size:14px;color:#3d8fe8">16.3℃</div>
<div class="t c" style="left:840.0px;top:179px;font-size:14px;color:#e8575c">24.4℃</div>
<div class="t c" style="left:940.0px;top:179px;font-size:14px;color:#606266">地暖</div>
<div class="t c" style="left:1040.0px;top:179px;font-size:14px;color:#606266">非节能</div>
<div class="abs" style="left:15px;top:210px;width:1063px;height:48px;background:#fff;border-bottom:1px solid #ebeef5"></div>
<div class="t c" style="left:53.0px;top:227px;font-size:14px;color:#606266">3</div>
<div class="t" style="left:101px;top:227px;font-size:14px;color:#3f93ec">首创国际一二期换...</div>
<div class="t c" style="left:290.0px;top:227px;font-size:14px;color:#606266">39</div>
<div class="t c" style="left:405.0px;top:227px;font-size:14px;color:#606266">36</div>
<div class="t c" style="left:530.0px;top:227px;font-size:14px;color:#606266">92.3%</div>
<div class="t c" style="left:640.0px;top:227px;font-size:14px;color:#9b7fbd">21.7℃</div>
<div class="t c" style="left:740.0px;top:227px;font-size:14px;color:#3d8fe8">17.0℃</div>
<div class="t c" style="left:840.0px;top:227px;font-size:14px;color:#e8575c">23.8℃</div>
<div class="t c" style="left:940.0px;top:227px;font-size:14px;color:#606266">地暖</div>
<div class="t c" style="left:1040.0px;top:227px;font-size:14px;color:#606266">非节能</div>
</div><div class="panel" style="left:1510px;top:131px;width:382px;height:306px">
<div class="phead"><div class="abs" style="left:20px;top:0;line-height:40px;font-size:14px;color:#555;white-space:nowrap"><svg width="14" height="12" viewBox="0 0 14 12" style="position:relative;left:0;top:0px;margin-right:8px;overflow:visible"><path d="M0.8 0 V11 H14" fill="none" stroke="#555" stroke-width="1.7"/><g fill="#555"><rect x="3.2" y="5" width="1.9" height="4.2"/><rect x="6" y="2.6" width="1.9" height="6.6"/><rect x="8.8" y="4" width="1.9" height="5.2"/><rect x="11.6" y="1" width="1.9" height="8.2"/></g></svg>室内温度分布</div></div>
<svg width="15" height="15" viewBox="0 0 18 18" style="left:348px;top:12px"><g fill="#409eff"><path d="M10.2 1 H17 V7.8 L14.6 5.4 L11.4 8.6 L9.4 6.6 L12.6 3.4 Z"/><path d="M7.8 17 H1 V10.2 L3.4 12.6 L6.6 9.4 L8.6 11.4 L5.4 14.6 Z"/></g></svg>
<svg width="382" height="306" viewBox="1510 131 382 306">
<text x="1543" y="198" font-size="12" fill="#666" text-anchor="start" >设备数量（个）</text>
<path d="M1570 342.0 H1847.5" stroke="#e4e4e4" stroke-width="1"/>
<path d="M1570 310.5 H1847.5" stroke="#e4e4e4" stroke-width="1"/>
<path d="M1570 279.0 H1847.5" stroke="#e4e4e4" stroke-width="1"/>
<path d="M1570 247.5 H1847.5" stroke="#e4e4e4" stroke-width="1"/>
<path d="M1570 216.0 H1847.5" stroke="#e4e4e4" stroke-width="1"/>
<text x="1562" y="377.0" font-size="13" fill="#666" text-anchor="end" >0</text>
<text x="1562" y="345.5" font-size="13" fill="#666" text-anchor="end" >10</text>
<text x="1562" y="314.0" font-size="13" fill="#666" text-anchor="end" >20</text>
<text x="1562" y="282.5" font-size="13" fill="#666" text-anchor="end" >30</text>
<text x="1562" y="251.0" font-size="13" fill="#666" text-anchor="end" >40</text>
<text x="1562" y="219.5" font-size="13" fill="#666" text-anchor="end" >50</text>
<rect x="1576.1" y="370.4" width="27.4" height="3.1" fill="#5470c6"/>
<rect x="1615.8" y="354.6" width="27.4" height="18.9" fill="#73c0de"/>
<rect x="1655.4" y="310.5" width="27.4" height="63.0" fill="#27a45a"/>
<rect x="1695.0" y="228.6" width="27.4" height="144.9" fill="#91cc75"/>
<rect x="1734.7" y="263.2" width="27.4" height="110.2" fill="#fac858"/>
<rect x="1774.3" y="367.2" width="27.4" height="6.3" fill="#fc8452"/>
<path d="M1570 373.5 H1847.5" stroke="#6e7079" stroke-width="1"/>
<path d="M1570.0 373.5 V378.5" stroke="#6e7079" stroke-width="1"/>
<path d="M1609.6 373.5 V378.5" stroke="#6e7079" stroke-width="1"/>
<path d="M1649.3 373.5 V378.5" stroke="#6e7079" stroke-width="1"/>
<path d="M1688.9 373.5 V378.5" stroke="#6e7079" stroke-width="1"/>
<path d="M1728.6 373.5 V378.5" stroke="#6e7079" stroke-width="1"/>
<path d="M1768.2 373.5 V378.5" stroke="#6e7079" stroke-width="1"/>
<path d="M1807.8 373.5 V378.5" stroke="#6e7079" stroke-width="1"/>
<path d="M1847.5 373.5 V378.5" stroke="#6e7079" stroke-width="1"/>
<path d="M1589.8 370.4 C1589.8 370.4 1624.5 358.4 1629.5 354.6 C1636.4 349.4 1664.4 318.0 1669.1 310.5 C1676.3 299.1 1701.2 228.6 1708.7 228.6 C1713.1 228.6 1744.6 256.6 1748.4 263.2 C1756.5 277.4 1779.3 355.0 1788.0 367.2 C1791.2 371.6 1827.7 373.5 1827.7 373.5" fill="none" stroke="#91cc75" stroke-width="2"/>
<circle cx="1589.8" cy="370.4" r="2.4" fill="#fff" stroke="#91cc75" stroke-width="1.5"/>
<circle cx="1629.5" cy="354.6" r="2.4" fill="#fff" stroke="#91cc75" stroke-width="1.5"/>
<circle cx="1669.1" cy="310.5" r="2.4" fill="#fff" stroke="#91cc75" stroke-width="1.5"/>
<circle cx="1708.7" cy="228.6" r="2.4" fill="#fff" stroke="#91cc75" stroke-width="1.5"/>
<circle cx="1748.4" cy="263.2" r="2.4" fill="#fff" stroke="#91cc75" stroke-width="1.5"/>
<circle cx="1788.0" cy="367.2" r="2.4" fill="#fff" stroke="#91cc75" stroke-width="1.5"/>
<circle cx="1827.7" cy="373.5" r="2.4" fill="#fff" stroke="#91cc75" stroke-width="1.5"/>
<text x="1589.8" y="350.9" font-size="12" fill="#444" text-anchor="middle" >0.9%</text>
<text x="1589.8" y="363.4" font-size="12" fill="#444" text-anchor="middle" >(1个)</text>
<text x="1629.5" y="335.1" font-size="12" fill="#444" text-anchor="middle" >5.5%</text>
<text x="1629.5" y="347.6" font-size="12" fill="#444" text-anchor="middle" >(6个)</text>
<text x="1669.1" y="291.0" font-size="12" fill="#444" text-anchor="middle" >18.2%</text>
<text x="1669.1" y="303.5" font-size="12" fill="#444" text-anchor="middle" >(20个)</text>
<text x="1708.7" y="209.1" font-size="12" fill="#444" text-anchor="middle" >41.8%</text>
<text x="1708.7" y="221.6" font-size="12" fill="#444" text-anchor="middle" >(46个)</text>
<text x="1748.4" y="243.8" font-size="12" fill="#444" text-anchor="middle" >31.8%</text>
<text x="1748.4" y="256.2" font-size="12" fill="#444" text-anchor="middle" >(35个)</text>
<text x="1788.0" y="347.7" font-size="12" fill="#444" text-anchor="middle" >1.8%</text>
<text x="1788.0" y="360.2" font-size="12" fill="#444" text-anchor="middle" >(2个)</text>
<text x="1591.8" y="382.5" font-size="11.5" fill="#8a8a8a" text-anchor="end" transform="rotate(-45 1591.8 382.5)">&lt;16</text>
<text x="1631.5" y="382.5" font-size="11.5" fill="#8a8a8a" text-anchor="end" transform="rotate(-45 1631.5 382.5)">16~18</text>
<text x="1671.1" y="382.5" font-size="11.5" fill="#8a8a8a" text-anchor="end" transform="rotate(-45 1671.1 382.5)">18~20</text>
<text x="1710.7" y="382.5" font-size="11.5" fill="#8a8a8a" text-anchor="end" transform="rotate(-45 1710.7 382.5)">20~22</text>
<text x="1750.4" y="382.5" font-size="11.5" fill="#8a8a8a" text-anchor="end" transform="rotate(-45 1750.4 382.5)">22~24</text>
<text x="1790.0" y="382.5" font-size="11.5" fill="#8a8a8a" text-anchor="end" transform="rotate(-45 1790.0 382.5)">24~26</text>
<text x="1829.7" y="382.5" font-size="11.5" fill="#8a8a8a" text-anchor="end" transform="rotate(-45 1829.7 382.5)">&gt;26</text>
<text x="1708" y="416.5" font-size="12" fill="#666" text-anchor="middle" >室内温度范围（℃）</text>
</svg></div>
<div class="panel" style="left:1510px;top:450px;width:382px;height:304px">
<div class="tabhead"><div class="tab on" style="left:0;width:147px;padding-left:20px"><svg width="14" height="12" viewBox="0 0 14 12" style="position:relative;top:1px;margin-right:8px;overflow:visible"><g fill="#409eff"><rect x="0" y="0" width="4" height="3.4"/><rect x="0" y="4.3" width="4" height="3.4"/><rect x="0" y="8.6" width="4" height="3.4"/><rect x="5" y="0" width="4" height="3.4"/><rect x="5" y="4.3" width="4" height="3.4"/><rect x="5" y="8.6" width="4" height="3.4"/><rect x="10" y="0" width="4" height="3.4"/><rect x="10" y="4.3" width="4" height="3.4"/><rect x="10" y="8.6" width="4" height="3.4"/></g></svg>楼内室温分布</div><div class="tab" style="left:147px;width:147px;padding-left:20px"><svg width="14" height="12" viewBox="0 0 14 12" style="position:relative;top:1px;margin-right:8px;overflow:visible"><g fill="#999"><rect x="0" y="0" width="4" height="3.4"/><rect x="0" y="4.3" width="4" height="3.4"/><rect x="0" y="8.6" width="4" height="3.4"/><rect x="5" y="0" width="4" height="3.4"/><rect x="5" y="4.3" width="4" height="3.4"/><rect x="5" y="8.6" width="4" height="3.4"/><rect x="10" y="0" width="4" height="3.4"/><rect x="10" y="4.3" width="4" height="3.4"/><rect x="10" y="8.6" width="4" height="3.4"/></g></svg>房间室温分布</div></div>
<div class="abs" style="left:15px;top:54px;width:116px;height:77px;background:#fac858;border:1px solid #8a8a8a;color:#fff"><div class="abs" style="left:0;top:0;width:48px;height:16px;background:rgba(0,0,0,.17);border-bottom-right-radius:5px"></div><div class="t" style="left:0px;top:3px;font-size:12px;color:#fff">边顶户</div><div class="t c" style="left:58px;top:19px;font-size:22px;font-weight:bold;color:#fff">23.3℃</div><div class="t c" style="left:58px;top:50px;font-size:13px;color:#fff">1户</div></div>
<div class="abs" style="left:132px;top:54px;width:117px;height:77px;background:#b0b0b0;border:1px solid #8a8a8a;color:#fff"><div class="abs" style="left:0;top:0;width:48px;height:16px;background:rgba(0,0,0,.17);border-bottom-right-radius:5px"></div><div class="t" style="left:0px;top:3px;font-size:12px;color:#fff">顶户</div><div class="t c" style="left:58px;top:19px;font-size:22px;font-weight:bold;color:#fff">-</div><div class="t c" style="left:58px;top:50px;font-size:13px;color:#fff">0户</div></div>
<div class="abs" style="left:250px;top:54px;width:117px;height:77px;background:#b0b0b0;border:1px solid #8a8a8a"></div>
<div class="abs" style="left:15px;top:133px;width:116px;height:77px;background:#b0b0b0;border:1px solid #8a8a8a;color:#fff"><div class="abs" style="left:0;top:0;width:48px;height:16px;background:rgba(0,0,0,.17);border-bottom-right-radius:5px"></div><div class="t" style="left:0px;top:3px;font-size:12px;color:#fff">边户</div><div class="t c" style="left:58px;top:19px;font-size:22px;font-weight:bold;color:#fff">-</div><div class="t c" style="left:58px;top:50px;font-size:13px;color:#fff">0户</div></div>
<div class="abs" style="left:132px;top:133px;width:117px;height:77px;background:#91cc75;border:1px solid #8a8a8a;color:#fff"><div class="abs" style="left:0;top:0;width:48px;height:16px;background:rgba(0,0,0,.17);border-bottom-right-radius:5px"></div><div class="t" style="left:0px;top:3px;font-size:12px;color:#fff">中户</div><div class="t c" style="left:58px;top:19px;font-size:22px;font-weight:bold;color:#fff">20.7℃</div><div class="t c" style="left:58px;top:50px;font-size:13px;color:#fff">15户</div></div>
<div class="abs" style="left:250px;top:133px;width:117px;height:77px;background:#b0b0b0;border:1px solid #8a8a8a"></div>
<div class="abs" style="left:15px;top:212px;width:116px;height:77px;background:#91cc75;border:1px solid #8a8a8a;color:#fff"><div class="abs" style="left:0;top:0;width:48px;height:16px;background:rgba(0,0,0,.17);border-bottom-right-radius:5px"></div><div class="t" style="left:0px;top:3px;font-size:12px;color:#fff">边底户</div><div class="t c" style="left:58px;top:19px;font-size:22px;font-weight:bold;color:#fff">21.3℃</div><div class="t c" style="left:58px;top:50px;font-size:13px;color:#fff">82户</div></div>
<div class="abs" style="left:132px;top:212px;width:117px;height:77px;background:#27a45a;border:1px solid #8a8a8a;color:#fff"><div class="abs" style="left:0;top:0;width:48px;height:16px;background:rgba(0,0,0,.17);border-bottom-right-radius:5px"></div><div class="t" style="left:0px;top:3px;font-size:12px;color:#fff">底户</div><div class="t c" style="left:58px;top:19px;font-size:22px;font-weight:bold;color:#fff">18.8℃</div><div class="t c" style="left:58px;top:50px;font-size:13px;color:#fff">12户</div></div>
<div class="abs" style="left:250px;top:212px;width:117px;height:77px;background:#b0b0b0;border:1px solid #8a8a8a"></div>
</div>
<div class="panel" style="left:1510px;top:765px;width:382px;height:190px">
<div class="tabhead"><div class="tab on" style="left:0;width:185px;padding-left:19px"><svg width="15" height="15" viewBox="0 0 16 16" style="position:relative;left:0;top:2px;margin-right:4px;overflow:visible"><path d="M7 1.6 A6.9 6.9 0 1 0 13 12.2 L7 8.6 Z" fill="#409eff"/><path d="M8.4 0.4 A7 7 0 0 1 15.6 7.4 H8.4 Z" fill="#409eff"/><path d="M9 8.8 H15.6 A7 7 0 0 1 14.2 11.9 Z" fill="#409eff"/></svg>室内温度高低温报警</div></div>
<svg width="382" height="170" viewBox="1510 765 382 170" style="overflow:hidden">
<circle cx="1701" cy="922.3" r="78" fill="#5470c6"/>
<path d="M1700.5 844.5 V828.5 H1715" fill="none" stroke="#f08a8a" stroke-width="1"/>
<text x="1721" y="833" font-size="12" fill="#444" text-anchor="start" >0.0%(0个)</text>
</svg></div></body></html>
